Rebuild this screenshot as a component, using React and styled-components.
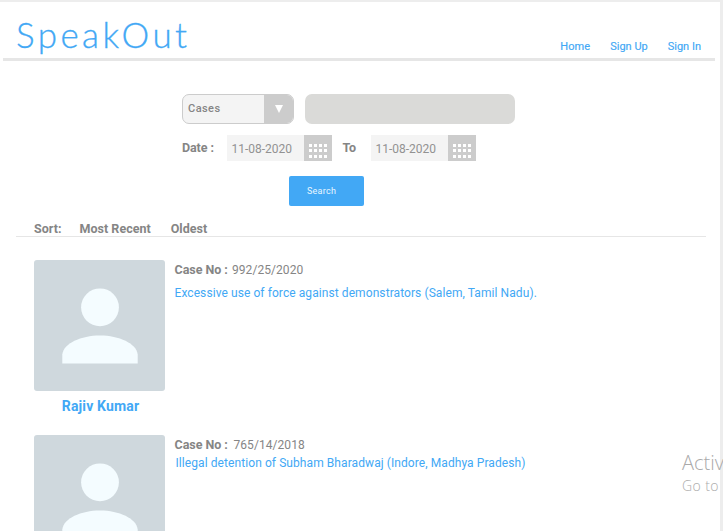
import React from "react";
import styled, { createGlobalStyle } from "styled-components";

const GlobalStyle = createGlobalStyle`
  *, *::before, *::after { box-sizing: border-box; }
  html, body { margin: 0; overflow: hidden; background: #fff; }
  body { font-family: Roboto, "Liberation Sans", sans-serif; color: #858585; }
`;

const Page = styled.div`
  position: relative;
  width: 723px;
  height: 531px;
  overflow: hidden;
  padding-top: 2px;
  box-shadow: inset -3px 0 #ededed, inset 0 2px #ededed;
  background: #fff;
`;

const Header = styled.header`
  display: flex;
  justify-content: space-between;
  width: 712px;
  height: 59px;
  margin-left: 3px;
  border-bottom: 3px solid #e6e6e6;
`;

const Logo = styled.h1`
  margin: 12px 0 0 13px;
  font: 300 35px/40px Lato, sans-serif;
  letter-spacing: 3.4px;
  color: #42a8f5;
  -webkit-text-stroke: 0.3px #42a8f5;
`;

const Nav = styled.nav`
  display: flex;
  gap: 20px;
  margin: 38px 14px 0 0;
`;

const NavLink = styled.a`
  font-size: 11px;
  line-height: 14px;
  letter-spacing: ${(p) => p.$tracking || "0"};
  color: #42a8f5;
  -webkit-text-stroke: 0.15px #42a8f5;
  white-space: nowrap;
`;

const SearchForm = styled.form`
  margin: 33px 0 0 182px;
`;

const FieldRow = styled.div`
  display: flex;
`;

const Select = styled.div`
  display: flex;
  width: 112px;
  height: 30px;
  margin-right: 11px;
  overflow: hidden;
  border: 1px solid #cccccc;
  border-radius: 7px;
  background: #f4f4f4;
`;

const SelectValue = styled.span`
  flex: 1;
  padding-left: 5px;
  font: 500 11px/27px Roboto, sans-serif;
  letter-spacing: 0.45px;
`;

const SelectArrow = styled.span`
  display: flex;
  align-items: center;
  justify-content: center;
  width: 29px;
  background: #cccccc;
`;

const Query = styled.div`
  width: 210px;
  height: 30px;
  border-radius: 7px;
  background: #dadad8;
`;

const DateRow = styled(FieldRow)`
  margin-top: 11px;
  height: 26px;
`;

const FieldLabel = styled.label`
  width: ${(p) => p.$width};
  padding-left: ${(p) => p.$inset || "0"};
  font-size: 12.5px;
  font-weight: 700;
  line-height: 26px;
  letter-spacing: -0.1px;
`;

const DateInput = styled.div`
  display: flex;
  width: 105px;
  background: #f4f4f4;
`;

const DateValue = styled.span`
  width: 77px;
  padding-left: 4.5px;
  font-size: 12px;
  line-height: 28px;
  letter-spacing: -0.02px;
  color: #929292;
`;

const CalendarButton = styled.span`
  display: grid;
  grid-template-columns: repeat(4, 3px);
  grid-auto-rows: 3px;
  gap: 2px;
  row-gap: 2.4px;
  width: 28px;
  padding: 9px 0 0 5px;
  background: #cccccc;
`;

const Dot = styled.i`
  background: #fff;
`;

const SearchButton = styled.div`
  width: 75px;
  height: 30px;
  margin: 15px 0 0 107px;
  padding-left: 18px;
  border-radius: 2px;
  background: #42a8f5;
  color: #e9f6ff;
  font-size: 9px;
  line-height: 30px;
  letter-spacing: 0.25px;
`;

const SortBar = styled.div`
  display: flex;
  width: 690px;
  height: 21px;
  margin: 10px 0 0 16px;
  padding: 0 0 0 18px;
  border-bottom: 1px solid #e6e6e6;
`;

const SortItem = styled.span`
  margin-right: ${(p) => p.$gap || "0"};
  padding-top: 5px;
  font-size: 12.5px;
  font-weight: 700;
  line-height: 16px;
  letter-spacing: 0.02px;
  white-space: nowrap;
`;

const CaseList = styled.main`
  margin: 23px 0 0 34px;
`;

const CaseItem = styled.article`
  display: flex;
  height: 175px;
`;

const Profile = styled.div`
  width: 131px;
`;

const Avatar = styled.svg`
  display: block;
  width: 131px;
  height: 131px;
`;

const PersonName = styled.div`
  margin-top: 5px;
  padding-left: 2px;
  text-align: center;
  font-size: 14px;
  font-weight: 700;
  line-height: 20px;
  letter-spacing: 0.15px;
  color: #42a8f5;
`;

const CaseInfo = styled.div`
  padding: ${(p) => p.$top || "2px"} 0 0 9.5px;
`;

const CaseNumber = styled.div`
  display: flex;
  font-size: 12px;
  line-height: 16px;
  letter-spacing: 0.06px;
`;

const CaseLabel = styled.span`
  width: ${(p) => p.$width};
  font-size: 12.5px;
  font-weight: 700;
  letter-spacing: -0.05px;
`;

const CaseTitle = styled.a`
  display: block;
  margin-top: ${(p) => p.$top};
  margin-left: ${(p) => p.$left || "0"};
  font-size: 12px;
  line-height: 16px;
  letter-spacing: 0.08px;
  white-space: nowrap;
  color: #42a8f5;
`;

const Watermark = styled.aside`
  position: absolute;
  left: 682px;
  top: 449px;
  color: #aaaaaa;
  font-family: "Open Sans", "Noto Sans", sans-serif;
  white-space: nowrap;
`;

const WatermarkTitle = styled.div`
  font-size: 20px;
  font-weight: 300;
  line-height: 28px;
`;

const WatermarkText = styled.div`
  font-size: 14px;
  font-weight: 300;
  line-height: 17px;
  letter-spacing: 0.4px;
`;

function DatePicker({ value }) {
  return (
    <DateInput>
      <DateValue>{value}</DateValue>
      <CalendarButton>
        {Array.from({ length: 12 }, (_, i) => <Dot key={i} />)}
      </CalendarButton>
    </DateInput>
  );
}

function PersonAvatar() {
  return (
    <Avatar viewBox="0 0 131 131">
      <rect width="131" height="131" rx="3" fill="#cfd8dd" />
      <circle cx="66" cy="47.3" r="18.9" fill="#f4fcff" />
      <path d="M28.3 103.5V94.5C29.5 83.5 47 75.6 66 75.6S102.5 83.5 103.7 94.5V103.5Z" fill="#f4fcff" />
    </Avatar>
  );
}

export default function App() {
  return (
    <>
      <GlobalStyle />
      <Page>
        <Header>
          <Logo>SpeakOut</Logo>
          <Nav>
            <NavLink $tracking="0.1px">Home</NavLink>
            <NavLink>Sign Up</NavLink>
            <NavLink>Sign In</NavLink>
          </Nav>
        </Header>
        <SearchForm>
          <FieldRow>
            <Select>
              <SelectValue>Cases</SelectValue>
              <SelectArrow>
                <svg width="8" height="8" viewBox="0 0 8 8">
                  <path d="M0 0H8L4 8Z" fill="#fff" />
                </svg>
              </SelectArrow>
            </Select>
            <Query />
          </FieldRow>
          <DateRow>
            <FieldLabel $width="45px">Date :</FieldLabel>
            <DatePicker value="11-08-2020" />
            <FieldLabel $width="39px" $inset="10.5px">To</FieldLabel>
            <DatePicker value="11-08-2020" />
          </DateRow>
          <SearchButton>Search</SearchButton>
        </SearchForm>
        <SortBar>
          <SortItem $gap="18px">Sort:</SortItem>
          <SortItem $gap="20px">Most Recent</SortItem>
          <SortItem>Oldest</SortItem>
        </SortBar>
        <CaseList>
          <CaseItem>
            <Profile>
              <PersonAvatar />
              <PersonName>Rajiv Kumar</PersonName>
            </Profile>
            <CaseInfo>
              <CaseNumber>
                <CaseLabel $width="57.5px">Case No :</CaseLabel>
                992/25/2020
              </CaseNumber>
              <CaseTitle $top="7px">
                Excessive use of force against demonstrators (Salem, Tamil Nadu).
              </CaseTitle>
            </CaseInfo>
          </CaseItem>
          <CaseItem>
            <Profile>
              <PersonAvatar />
            </Profile>
            <CaseInfo $top="1.5px">
              <CaseNumber>
                <CaseLabel $width="59px">Case No :</CaseLabel>
                765/14/2018
              </CaseNumber>
              <CaseTitle $top="2.5px" $left="1px">
                Illegal detention of Subham Bharadwaj (Indore, Madhya Pradesh)
              </CaseTitle>
            </CaseInfo>
          </CaseItem>
        </CaseList>
        <Watermark>
          <WatermarkTitle>Activ</WatermarkTitle>
          <WatermarkText>Go to</WatermarkText>
        </Watermark>
      </Page>
    </>
  );
}
